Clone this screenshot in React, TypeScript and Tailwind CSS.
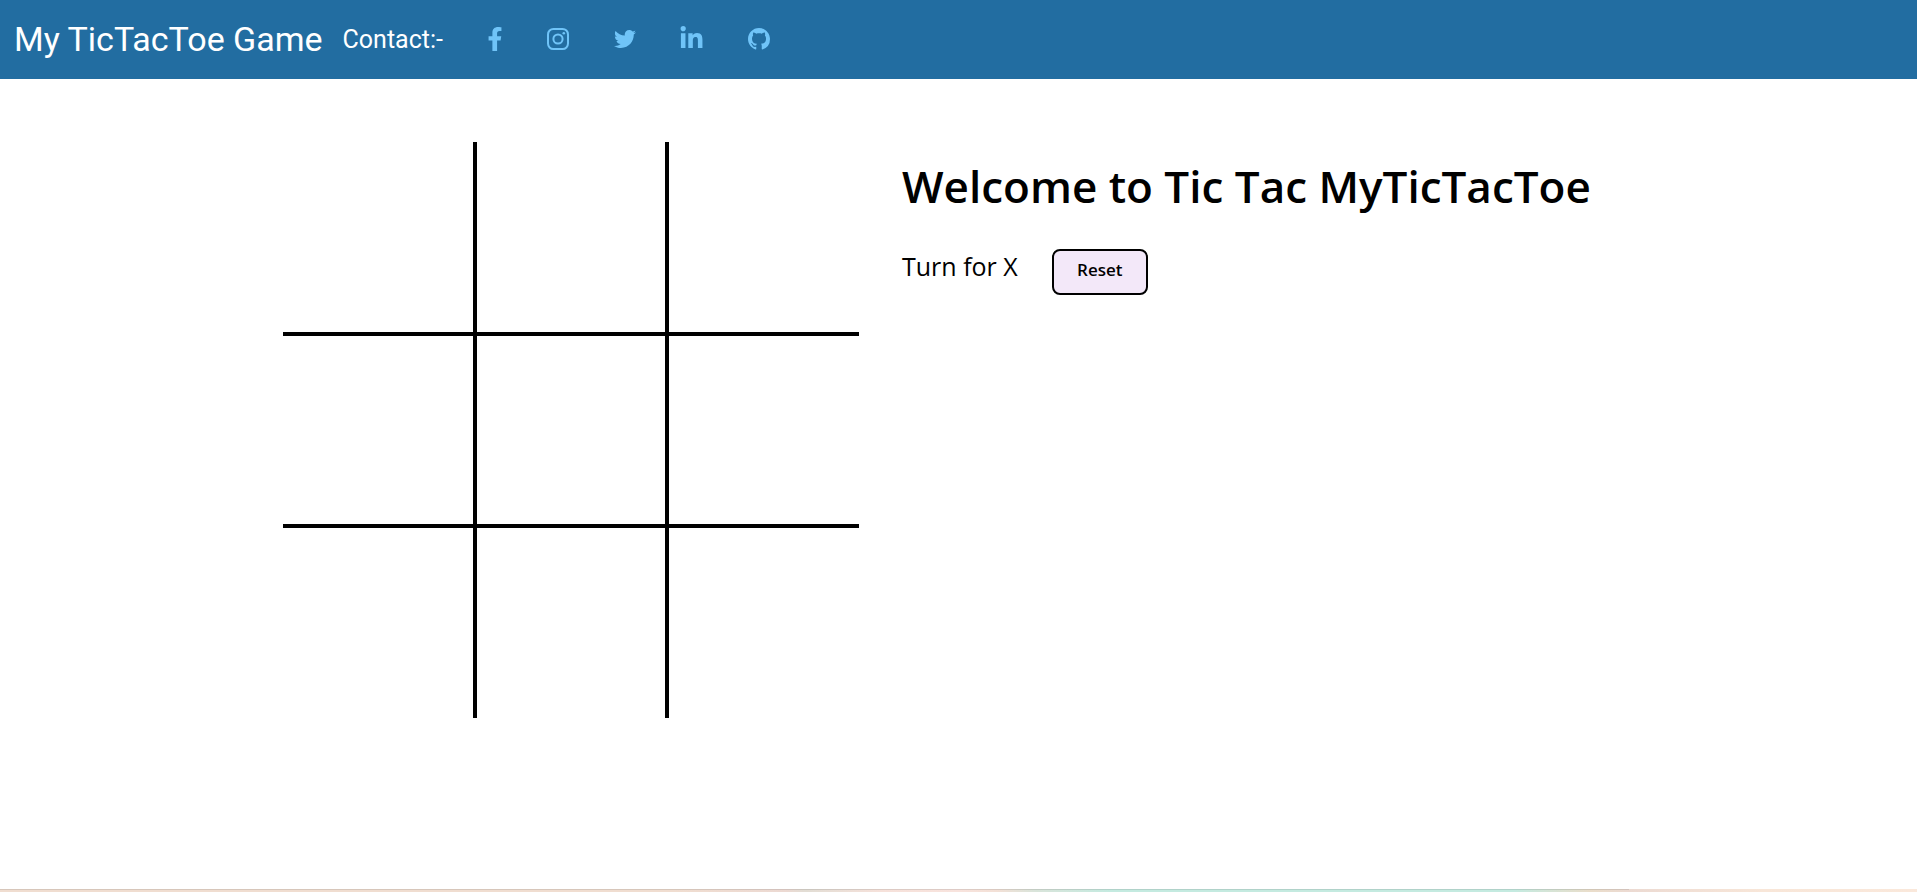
import { useState } from "react";
import { FaFacebookF, FaTwitter, FaLinkedinIn } from "react-icons/fa";
import { BsGithub } from "react-icons/bs";

function InstagramIcon({ size, className }: { size: number; className?: string }) {
  return (
    <svg width={size} height={size} viewBox="0 0 22 22" fill="none" stroke="currentColor" strokeWidth="2" className={className}>
      <rect x="1" y="1" width="20" height="20" rx="5.4" />
      <circle cx="11" cy="11" r="4.6" />
      <circle cx="16.8" cy="5.2" r="1.3" fill="currentColor" stroke="none" />
    </svg>
  );
}

const links = [
  { name: "Facebook", Icon: FaFacebookF, size: 24, box: "w-4" },
  { name: "Instagram", Icon: InstagramIcon, size: 22, box: "w-6" },
  { name: "Twitter", Icon: FaTwitter, size: 22, box: "w-6" },
  { name: "LinkedIn", Icon: FaLinkedinIn, size: 25, box: "w-6" },
  { name: "GitHub", Icon: BsGithub, size: 22, box: "w-6" },
];

const cellBorders = [
  "border-r-2 border-b-2",
  "border-x-2 border-b-2",
  "border-l-2 border-b-2",
  "border-r-2 border-y-2",
  "border-2",
  "border-l-2 border-y-2",
  "border-r-2 border-t-2",
  "border-x-2 border-t-2",
  "border-l-2 border-t-2",
];

export default function App() {
  const [cells, setCells] = useState<string[]>(Array(9).fill(""));
  const turn = cells.filter(Boolean).length % 2 === 0 ? "X" : "0";

  const play = (index: number) => {
    if (!cells[index]) setCells(cells.map((c, i) => (i === index ? turn : c)));
  };

  return (
    <div className="flex min-h-screen flex-col bg-white font-['Open_Sans',sans-serif] text-black">
      <nav className="flex h-[79px] items-center bg-[#226da1] px-3.5 font-[Roboto,sans-serif] text-white">
        <h2 className="pb-0.5 text-[34px] leading-none">My TicTacToe Game</h2>
        <span className="ml-5 text-[25px] leading-none">Contact:-</span>
        <ul className="ml-11 flex items-center gap-[43px] pb-0.5 text-[#70c4f8]">
          {links.map(({ name, Icon, size, box }) => (
            <li key={name}>
              <a href="#" aria-label={name} className={`flex justify-center ${box}`}>
                <Icon size={size} className="shrink-0" />
              </a>
            </li>
          ))}
        </ul>
      </nav>

      <main className="flex flex-1 items-start justify-center gap-[43px] pt-[63px] pb-8">
        <div className="grid shrink-0 auto-rows-[192px] grid-cols-[repeat(3,192px)]">
          {cells.map((value, i) => (
            <button
              key={i}
              type="button"
              aria-label={`Cell ${i + 1}`}
              onClick={() => play(i)}
              className={`cursor-pointer border-black text-7xl ${cellBorders[i]}`}
            >
              {value}
            </button>
          ))}
        </div>

        <section className="w-[732px] pt-3">
          <h1 className="text-[44px] leading-[64px] font-semibold whitespace-nowrap">
            Welcome to Tic Tac MyTicTacToe
          </h1>
          <div className="mt-[31px] flex items-start gap-[34px]">
            <span className="text-[25px] leading-[34px]">Turn for {turn}</span>
            <button
              type="button"
              onClick={() => setCells(Array(9).fill(""))}
              className="h-[46px] w-24 cursor-pointer rounded-lg border-2 border-black bg-[#f3e8f9] pb-1 text-[17px] font-semibold"
            >
              Reset
            </button>
          </div>
        </section>
      </main>

      <div className="h-[3px] bg-[linear-gradient(to_right,#f0ddd0_0%,#f0ddd0_35%,#ecd9d2_41%,#e2ddd4_42%,#f6e1da_46%,#f8e3dd_50%,#f3e0d6_52%,#d9e4da_54%,#c4eae0_58%,#c4eae0_79%,#eaddca_83%,#ecdad2_85%,#f8e6d8_92%,#fae8db_100%)]">
        <div className="h-px w-[85%] bg-black/10" />
      </div>
    </div>
  );
}
